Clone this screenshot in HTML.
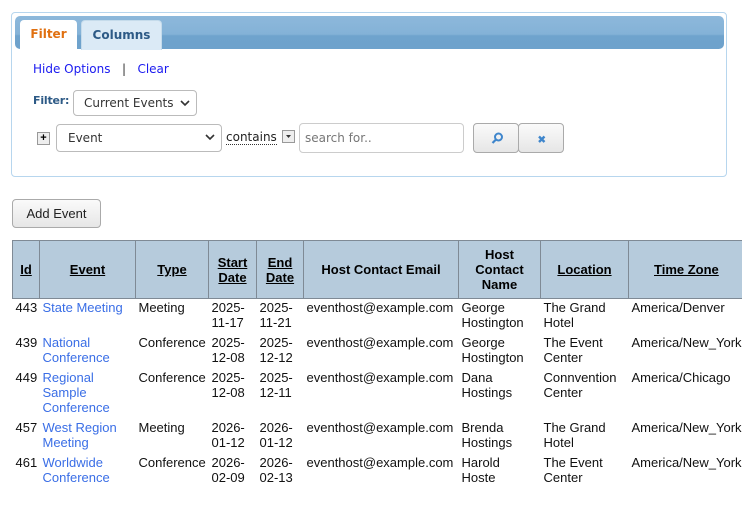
<!DOCTYPE html>
<html><head><style>
body{margin:0;width:742px;height:514px;overflow:hidden;background:#fff;font-family:"Liberation Sans",Arial,sans-serif;font-size:13px;position:relative}
.ab{position:absolute}
.panel{left:11px;top:12px;width:714px;height:163px;border:1px solid #b7d6ee;border-radius:4px}
.bar{left:15px;top:16px;width:709px;height:33px;border-radius:5px;background:linear-gradient(#8db8db,#84b2d7 55%,#6fa3cd 60%,#6ea2cc)}
.tab{top:20px;height:29px;border-radius:4px 4px 0 0;font-weight:bold;line-height:29px;text-align:center;font-family:"DejaVu Sans",sans-serif;font-size:12px}
.sel{border:1px solid #bbb;border-radius:4px;background:#fff;height:26px;box-sizing:border-box;color:#333;line-height:24px;padding-left:10px;font-family:"DejaVu Sans",sans-serif;font-size:12px}
.sel svg{position:absolute;right:6px;top:9px}
a{color:#1a1af0;text-decoration:none}
.btn{border:1px solid #aaa;border-radius:4px;background:linear-gradient(#fafafa,#e6e6e6);box-sizing:border-box}
table{position:absolute;left:12px;top:240px;border-collapse:collapse;table-layout:fixed;width:820px}
th{background:#b6cbdc;border:1px solid #7f8a95;font-weight:bold;font-size:13px;line-height:15px;padding:0 2px;height:57px;text-align:center}
th u{text-decoration:underline}
td{vertical-align:top;padding:1px 3px 4px 3px;line-height:15px;font-size:13px;color:#111}
td a{color:#3a6ee6}
</style></head><body>
<div class="ab panel"></div>
<div class="ab bar"></div>
<div class="ab tab" style="left:20px;width:57px;background:#fff;color:#e07010">Filter</div>
<div class="ab tab" style="left:81px;width:79px;background:#dbeaf6;color:#2d5a86;border:1px solid #c5dbeb;border-bottom:none">Columns</div>
<div class="ab" style="left:33px;top:62px;font-family:'DejaVu Sans',sans-serif;font-size:12px"><a>Hide Options</a>&nbsp;&nbsp;&nbsp;<span style="color:#333">|</span>&nbsp;&nbsp;&nbsp;<a>Clear</a></div>
<div class="ab" style="left:33px;top:94px;font-weight:bold;color:#2d5a86;font-family:'DejaVu Sans',sans-serif;font-size:11px;letter-spacing:-0.2px">Filter:</div>
<div class="ab sel" style="left:73px;top:90px;width:124px">Current Events<svg width="10" height="7"><path d="M1 1l4 4 4-4" stroke="#333" stroke-width="1.6" fill="none"/></svg></div>
<div class="ab" style="left:37px;top:132px;width:11px;height:11px;border:1px solid #999;background:#eee;font-size:11px;line-height:11px;text-align:center;font-weight:bold">+</div>
<div class="ab sel" style="left:56px;top:124px;width:166px;height:28px;line-height:26px;padding-left:11px">Event<svg width="10" height="7"><path d="M1 1l4 4 4-4" stroke="#333" stroke-width="1.6" fill="none"/></svg></div>
<div class="ab" style="left:226px;top:130px;color:#222;border-bottom:1px dotted #333;line-height:14px;font-family:'DejaVu Sans',sans-serif;font-size:12px">contains</div>
<div class="ab" style="left:282px;top:130px;width:11px;height:11px;border:1px solid #999;background:#eee"><svg width="11" height="11" style="position:absolute;top:0;left:0"><path d="M3 4h5l-2.5 3z" fill="#333"/></svg></div>
<div class="ab" style="left:299px;top:123px;width:165px;height:30px;border:1px solid #ccc;border-radius:4px;box-sizing:border-box;color:#777;padding-left:5px;line-height:28px;font-family:'DejaVu Sans',sans-serif;font-size:12px">search for..</div>
<div class="ab btn" style="left:473px;top:123px;width:46px;height:30px"><svg width="46" height="30"><circle cx="24.5" cy="13" r="3.5" stroke="#3f86cc" stroke-width="2" fill="none"/><path d="M22 15.5l-3.5 3.5" stroke="#3f86cc" stroke-width="2.2"/></svg></div>
<div class="ab btn" style="left:518px;top:123px;width:46px;height:30px"><svg width="46" height="30"><path d="M20 12.5l5.5 5.5M25.5 12.5l-5.5 5.5" stroke="#3f86cc" stroke-width="2.4"/></svg></div>
<div class="ab btn" style="left:12px;top:199px;width:89px;height:29px;text-align:center;line-height:27px;color:#222">Add Event</div>
<table>
<colgroup><col style="width:27px"><col style="width:96px"><col style="width:73px"><col style="width:48px"><col style="width:47px"><col style="width:155px"><col style="width:82px"><col style="width:88px"><col style="width:204px"></colgroup>
<tr><th><u>Id</u></th><th><u>Event</u></th><th><u>Type</u></th><th><u>Start Date</u></th><th><u>End Date</u></th><th>Host Contact Email</th><th>Host Contact Name</th><th><u>Location</u></th><th style="text-align:left;padding-left:25px"><u>Time Zone</u></th></tr>
<tr><td>443</td><td><a>State Meeting</a></td><td>Meeting</td><td>2025-11-17</td><td>2025-11-21</td><td>eventhost@example.com</td><td>George Hostington</td><td>The Grand Hotel</td><td>America/Denver</td></tr>
<tr><td>439</td><td><a>National Conference</a></td><td>Conference</td><td>2025-12-08</td><td>2025-12-12</td><td>eventhost@example.com</td><td>George Hostington</td><td>The Event Center</td><td>America/New_York</td></tr>
<tr><td>449</td><td><a>Regional Sample Conference</a></td><td>Conference</td><td>2025-12-08</td><td>2025-12-11</td><td>eventhost@example.com</td><td>Dana Hostings</td><td>Connvention Center</td><td>America/Chicago</td></tr>
<tr><td>457</td><td><a>West Region Meeting</a></td><td>Meeting</td><td>2026-01-12</td><td>2026-01-12</td><td>eventhost@example.com</td><td>Brenda Hostings</td><td>The Grand Hotel</td><td>America/New_York</td></tr>
<tr><td>461</td><td><a>Worldwide Conference</a></td><td>Conference</td><td>2026-02-09</td><td>2026-02-13</td><td>eventhost@example.com</td><td>Harold<br>Hoste</td><td>The Event Center</td><td>America/New_York</td></tr>
</table>
</body></html>
